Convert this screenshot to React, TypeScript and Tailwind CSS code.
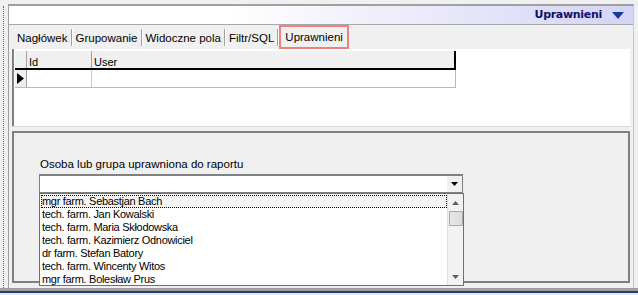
import { Fragment } from "react";

const TABS = ["Nagłówek", "Grupowanie", "Widoczne pola", "Filtr/SQL", "Uprawnieni"];

const PEOPLE = [
  "mgr farm. Sebastjan Bach",
  "tech. farm. Jan Kowalski",
  "tech. farm. Maria Skłodowska",
  "tech. farm. Kazimierz Odnowiciel",
  "dr farm. Stefan Batory",
  "tech. farm. Wincenty Witos",
  "mgr farm. Bolesław Prus",
];

export default function App() {
  return (
    <div className="relative flex h-[295px] w-[638px] flex-col overflow-hidden bg-[#f0f0f0] font-['Liberation_Sans',Arial,sans-serif] text-[11.5px] text-black">
      <div className="flex h-[288px] pt-[4px]">
        {/* Dotted gripper */}
        <div className="flex w-[8px] justify-start pl-[3px] pt-[2px]">
          <div className="h-full border-l border-dotted border-[#606060]" />
        </div>

        {/* Report panel */}
        <div className="mr-[4px] flex flex-1 flex-col border-t-2 border-l border-[#a0a0a0] border-r border-r-[#c8c8c8]">
          {/* Header band */}
          <div className="flex h-[19px] items-center justify-end gap-[10px] border-b border-[#a8a8a8] bg-[linear-gradient(to_right,#ffffff_0%,#ffffff_35%,#d4d4f6_100%)] pr-[9px]">
            <span className="font-['DejaVu_Sans',sans-serif] text-[11px] font-bold tracking-[-0.3px] text-[#10106a]">Uprawnieni</span>
            <svg width="12" height="7" viewBox="0 0 12 7">
              <polygon points="0,0 12,0 6,7" fill="#1a3a9a" />
            </svg>
          </div>

          {/* Tabs */}
          <div className="flex h-[24px] items-end pl-[5px]">
            {TABS.map((t, i) => (
              <Fragment key={t}>
                {i > 0 && <div className="mb-[3px] h-[17px] w-[2px] border-l border-[#a0a0a0] border-r border-r-white" />}
                {t === "Uprawnieni" ? (
                  <div className="flex h-[24px] items-center border-2 border-[#ee8080] px-[4px] pt-[1px]">{t}</div>
                ) : (
                  <div className="flex h-[22px] items-center px-[3px] pt-[2px]">{t}</div>
                )}
              </Fragment>
            ))}
          </div>

          {/* Grid area */}
          <div className="mx-[3px] flex h-[77px] flex-col border-l-2 border-[#808080] bg-white pt-[2px] pl-[1px] text-[11px]">
            <div className="flex h-[19px] w-[441px] border-b-2 border-r-2 border-black bg-[#f0f0f0]">
              <div className="w-[12px] border-r border-[#a0a0a0]" />
              <div className="w-[65px] border-r border-[#a0a0a0] pl-[2px] pt-[3px]">Id</div>
              <div className="flex-1 pl-[2px] pt-[3px]">User</div>
            </div>
            <div className="flex h-[18px] w-[441px] border-b border-r border-[#b8b8b8]">
              <div className="flex w-[12px] items-center border-r border-[#a0a0a0] bg-[#f0f0f0] pl-[2px]">
                <svg width="7" height="11" viewBox="0 0 7 11">
                  <polygon points="0,0 7,5.5 0,11" fill="#000" />
                </svg>
              </div>
              <div className="w-[65px] border-r border-[#c8c8c8]" />
              <div className="flex-1" />
            </div>
          </div>

          {/* Splitter */}
          <div className="mx-[3px] h-[5px] border-t border-[#d8d8d8]" />

          {/* Lower panel */}
          <div className="relative mx-[3px] h-[152px] border-t-2 border-l-2 border-[#808080] border-r-2 border-b-2">
            <div className="pl-[26px] pt-[25px] leading-[13px]">Osoba lub grupa uprawniona do raportu</div>
            <div className="ml-[25px] mt-[3px] flex h-[19px] w-[424px] border border-[#808080] border-t-2 bg-white">
              <div className="flex-1" />
              <div className="flex w-[15px] items-center justify-center bg-[#f0f0f0]">
                <svg width="7" height="4" viewBox="0 0 7 4">
                  <polygon points="0,0 7,0 3.5,4" fill="#000" />
                </svg>
              </div>
            </div>

            {/* Dropdown list */}
            <div className="absolute left-[25px] top-[60px] z-10 flex h-[93px] w-[425px] border border-[#707070] bg-white text-[11px] tracking-[-0.3px]">
              <div className="flex-1 pt-[1px] pl-[1px]">
                {PEOPLE.map((p, i) => (
                  <div
                    key={p}
                    className={`h-[13px] pl-[1px] leading-[13px] ${i === 0 ? "outline-1 outline-dotted -outline-offset-1 outline-black bg-[#f4f4f4]" : ""}`}
                  >
                    {p}
                  </div>
                ))}
              </div>
              <div className="flex w-[16px] flex-col items-center border-l border-[#e0e0e0] bg-[#f2f2f2]">
                <div className="flex h-[17px] items-center">
                  <svg width="7" height="4" viewBox="0 0 7 4">
                    <polygon points="3.5,0 7,4 0,4" fill="#606060" />
                  </svg>
                </div>
                <div className="h-[15px] w-[14px] rounded-[1px] border border-[#a8a8a8] bg-[linear-gradient(to_right,#e8e8e8,#dcdcdc)]" />
                <div className="flex-1" />
                <div className="flex h-[17px] items-center">
                  <svg width="7" height="4" viewBox="0 0 7 4">
                    <polygon points="0,0 7,0 3.5,4" fill="#606060" />
                  </svg>
                </div>
              </div>
            </div>
          </div>
        </div>
      </div>

      {/* Bottom edge */}
      <div className="h-[3px] bg-[#a0a0a0]" />
      <div className="h-[2px] bg-[#1c3c78]" />
      <div className="flex-1 bg-[#e8e8e8]" />
    </div>
  );
}
